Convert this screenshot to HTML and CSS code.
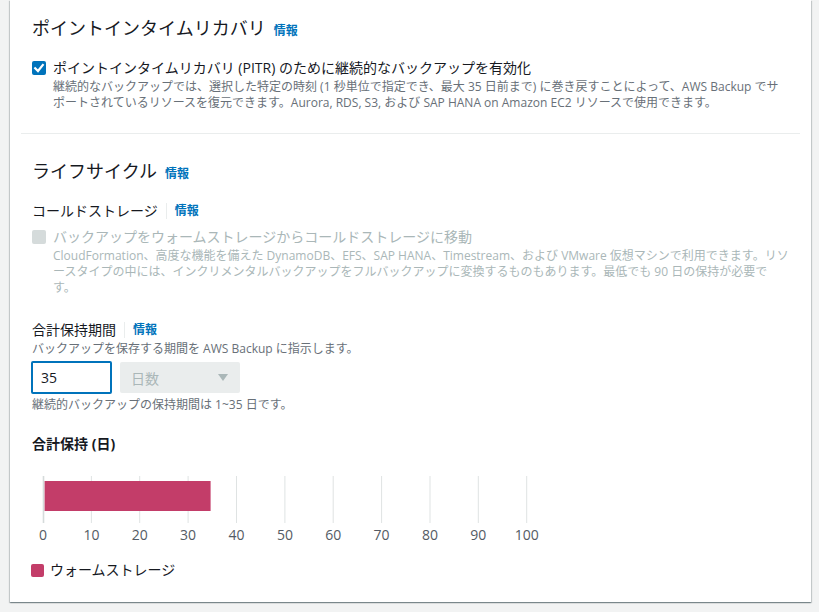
FILE: index.html
```html
<!DOCTYPE html>
<html lang="ja">
<head>
<meta charset="utf-8">
<title>バックアップルール</title>
<link rel="stylesheet" href="styles.css">
</head>
<body>
<div class="card">
  <section class="section section-first">
    <h2 class="heading">ポイントインタイムリカバリ<a class="info">情報</a></h2>
    <div class="check-row check-row-first">
      <span class="checkbox checked"><svg width="14" height="14" viewBox="0 0 14 14"><path d="M3.2 7.2 L6 10 L10.8 4" fill="none" stroke="#fff" stroke-width="2.2" stroke-linecap="square"/></svg></span>
      <div class="check-text">
        <div class="check-label">ポイントインタイムリカバリ (PITR) のために継続的なバックアップを有効化</div>
        <div class="check-desc lines-2">継続的なバックアップでは、選択した特定の時刻 (1 秒単位で指定でき、最大 35 日前まで) に巻き戻すことによって、AWS Backup でサ<br>ポートされているリソースを復元できます。Aurora, RDS, S3, および SAP HANA on Amazon EC2 リソースで使用できます。</div>
      </div>
    </div>
  </section>

  <section class="section section-second">
    <h2 class="heading">ライフサイクル<a class="info">情報</a></h2>

    <div class="field-label field-cold">コールドストレージ<span class="sep"></span><a class="info">情報</a></div>
    <div class="check-row check-row-cold">
      <span class="checkbox disabled-box"></span>
      <div class="check-text">
        <div class="check-label muted">バックアップをウォームストレージからコールドストレージに移動</div>
        <div class="check-desc lines-3 muted">CloudFormation、高度な機能を備えた DynamoDB、EFS、SAP HANA、Timestream、および VMware 仮想マシンで利用できます。リソ<br>ースタイプの中には、インクリメンタルバックアップをフルバックアップに変換するものもあります。最低でも 90 日の保持が必要で<br>す。</div>
      </div>
    </div>

    <div class="field-label field-retention">合計保持期間<span class="sep"></span><a class="info">情報</a></div>
    <div class="field-desc">バックアップを保存する期間を AWS Backup に指示します。</div>
    <div class="input-row">
      <div class="input">35</div>
      <div class="select">
        <span>日数</span>
        <svg width="10" height="7" viewBox="0 0 10 7"><path d="M0 0 H10 L5 7 Z" fill="#aab7b8"/></svg>
      </div>
    </div>
    <div class="field-desc constraint">継続的バックアップの保持期間は 1~35 日です。</div>

    <div class="chart-title">合計保持 (日)</div>
    <svg class="chart" width="520" height="80" viewBox="0 0 520 80">
      <g stroke="#dfe3e3" stroke-width="1">
        <line x1="59.4" y1="10" x2="59.4" y2="57"/>
        <line x1="107.7" y1="10" x2="107.7" y2="57"/>
        <line x1="156.1" y1="10" x2="156.1" y2="57"/>
        <line x1="204.5" y1="10" x2="204.5" y2="57"/>
        <line x1="252.9" y1="10" x2="252.9" y2="57"/>
        <line x1="301.2" y1="10" x2="301.2" y2="57"/>
        <line x1="349.6" y1="10" x2="349.6" y2="57"/>
        <line x1="398" y1="10" x2="398" y2="57"/>
        <line x1="446.3" y1="10" x2="446.3" y2="57"/>
        <line x1="494.7" y1="10" x2="494.7" y2="57"/>
      </g>
      <line x1="11.5" y1="10" x2="11.5" y2="57" stroke="#d5dbdb" stroke-width="1.6"/>
      <rect x="12.6" y="15" width="166" height="30" fill="#c33d69"/>
      <g class="tick" text-anchor="middle">
        <text x="11" y="74">0</text>
        <text x="59.4" y="74">10</text>
        <text x="107.7" y="74">20</text>
        <text x="156.1" y="74">30</text>
        <text x="204.5" y="74">40</text>
        <text x="252.9" y="74">50</text>
        <text x="301.2" y="74">60</text>
        <text x="349.6" y="74">70</text>
        <text x="398" y="74">80</text>
        <text x="446.3" y="74">90</text>
        <text x="494.7" y="74">100</text>
      </g>
    </svg>
    <div class="legend"><span class="swatch"></span>ウォームストレージ</div>
  </section>
</div>
</body>
</html>
```
FILE: styles.css
```css
* { box-sizing: border-box; }
html, body { margin: 0; }
body {
  background: #f2f3f3;
  padding: 0 8px 10px 10px;
  font-family: "Open Sans", "Noto Sans CJK JP", sans-serif;
  color: #16191f;
  font-size: 14px;
}
.card {
  background: #fff;
  padding: 17px 11px 22px;
  box-shadow: 0 1px 1px 0 rgba(0, 28, 36, 0.3), 1px 1px 1px 0 rgba(0, 28, 36, 0.15), -1px 1px 1px 0 rgba(0, 28, 36, 0.15);
}
.section { padding: 0 11px; }
.section-first { padding-bottom: 22px; border-bottom: 1px solid #eaeded; }
.section-second { padding-top: 26px; }
.heading {
  margin: 0;
  font-size: 18px;
  font-weight: 400;
  line-height: 22px;
  height: 22px;
  white-space: nowrap;
}
.info {
  font-size: 12px;
  font-weight: 700;
  color: #0073bb;
  text-decoration: none;
  line-height: 1;
}
.heading .info { margin-left: 8px; }
.check-row { display: flex; gap: 7px; }
.check-row-first { margin-top: 19px; }
.check-row-cold { margin-top: 6px; }
.checkbox {
  width: 14px;
  height: 14px;
  border-radius: 2px;
  flex: none;
  margin-top: 3px;
  display: block;
}
.checkbox svg { display: block; }
.checked { background: #0073bb; }
.disabled-box { background: #d5dbdb; }
.check-label { font-size: 14px; line-height: 20px; height: 20px; white-space: nowrap; }
.check-desc {
  font-size: 12px;
  line-height: 16px;
  color: #687078;
  white-space: nowrap;
  margin-top: 1px;
}
.lines-2 { height: 32px; }
.lines-3 { height: 48px; }
.muted { color: #aab7b8; }
.field-label {
  display: flex;
  align-items: center;
  font-size: 14px;
  line-height: 20px;
  height: 20px;
}
.field-cold { margin-top: 19px; }
.field-retention { margin-top: 24px; }
.sep {
  width: 1px;
  height: 16px;
  background: #eaeded;
  margin: 0 8px;
}
.field-desc {
  font-size: 12px;
  line-height: 16px;
  height: 16px;
  color: #687078;
  margin-top: 1px;
}
.input-row {
  display: flex;
  align-items: center;
  gap: 8px;
  margin-top: 4px;
  height: 33px;
}
.input {
  width: 81px;
  height: 33px;
  margin-left: -1px;
  border: 2px solid #0073bb;
  border-radius: 2px;
  padding: 0 8px;
  font-size: 14px;
  line-height: 29px;
}
.select {
  width: 120px;
  height: 31px;
  background: #eaeded;
  border-radius: 2px;
  padding: 0 12px 0 11px;
  display: flex;
  align-items: center;
  justify-content: space-between;
  color: #aab7b8;
  font-size: 14px;
}
.constraint { margin-top: 3px; }
.chart-title {
  margin-top: 21px;
  font-size: 14px;
  font-weight: 700;
  line-height: 20px;
  height: 20px;
}
.chart { display: block; margin-top: 12px; }
.tick { font-family: "Open Sans", sans-serif; font-size: 14px; fill: #545b64; }
.legend {
  margin-top: 14px;
  display: flex;
  align-items: center;
  gap: 6px;
  line-height: 20px;
  height: 20px;
  font-size: 14px;
  margin-left: -1px;
}
.swatch {
  width: 13px;
  height: 13px;
  border-radius: 2px;
  background: #c33d69;
}
```
